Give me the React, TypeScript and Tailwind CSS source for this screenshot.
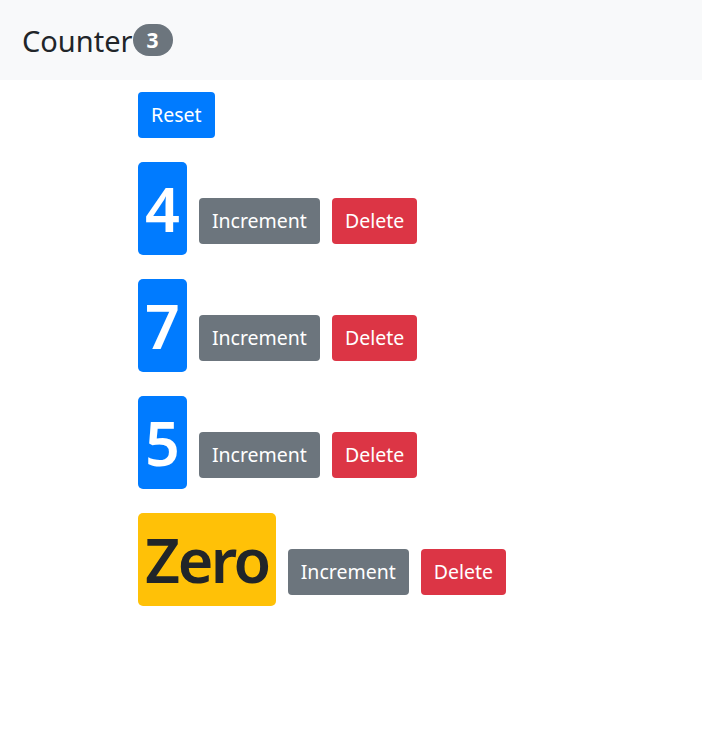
import { useState } from 'react';

interface Item {
  id: number;
  value: number;
}

const font = { fontFamily: '"Noto Sans", "Open Sans", sans-serif' };

export default function App() {
  const [counters, setCounters] = useState<Item[]>([
    { id: 1, value: 4 },
    { id: 2, value: 7 },
    { id: 3, value: 5 },
    { id: 4, value: 0 },
  ]);

  const nonZero = counters.filter(c => c.value > 0).length;

  const increment = (id: number) =>
    setCounters(cs => cs.map(c => (c.id === id ? { ...c, value: c.value + 1 } : c)));
  const remove = (id: number) => setCounters(cs => cs.filter(c => c.id !== id));
  const reset = () => setCounters(cs => cs.map(c => ({ ...c, value: 0 })));

  return (
    <div className="min-h-[745px] bg-white text-[#212529]" style={font}>
      {/* 네비게이션 */}
      <nav className="h-[80px] bg-[#f8f9fa] flex items-center pl-[22px]">
        <span className="text-[29px] leading-none text-[#212529]">Counter</span>
        <span className="h-[32px] min-w-[40px] px-[12px] rounded-full bg-[#6c757d] text-white text-[21px] font-bold flex items-center justify-center leading-none">
          {nonZero}
        </span>
      </nav>

      <main className="pl-[138px] pt-[12px] flex flex-col items-start gap-[24px]">
        <button
          onClick={reset}
          className="h-[46px] px-[13px] rounded-[4px] bg-[#007bff] text-white text-[19.5px] leading-none"
        >
          Reset
        </button>

        {counters.map(c => {
          const isZero = c.value === 0;
          return (
            <div key={c.id} className="flex items-start">
              <span
                className={`h-[93px] px-[7px] flex items-center justify-center rounded-[5px] text-[61px] font-semibold leading-none ${
                  isZero ? 'bg-[#ffc107] text-[#212529] tracking-[-2.5px]' : 'bg-[#007bff] text-white'
                }`}
              >
                {isZero ? 'Zero' : c.value}
              </span>
              <button
                onClick={() => increment(c.id)}
                className="ml-[12px] mt-[36px] h-[46px] px-[13px] rounded-[4px] bg-[#6c757d] text-white text-[19.5px] leading-none"
              >
                Increment
              </button>
              <button
                onClick={() => remove(c.id)}
                className="ml-[12px] mt-[36px] h-[46px] px-[13px] rounded-[4px] bg-[#dc3545] text-white text-[19.5px] leading-none"
              >
                Delete
              </button>
            </div>
          );
        })}
      </main>
    </div>
  );
}
